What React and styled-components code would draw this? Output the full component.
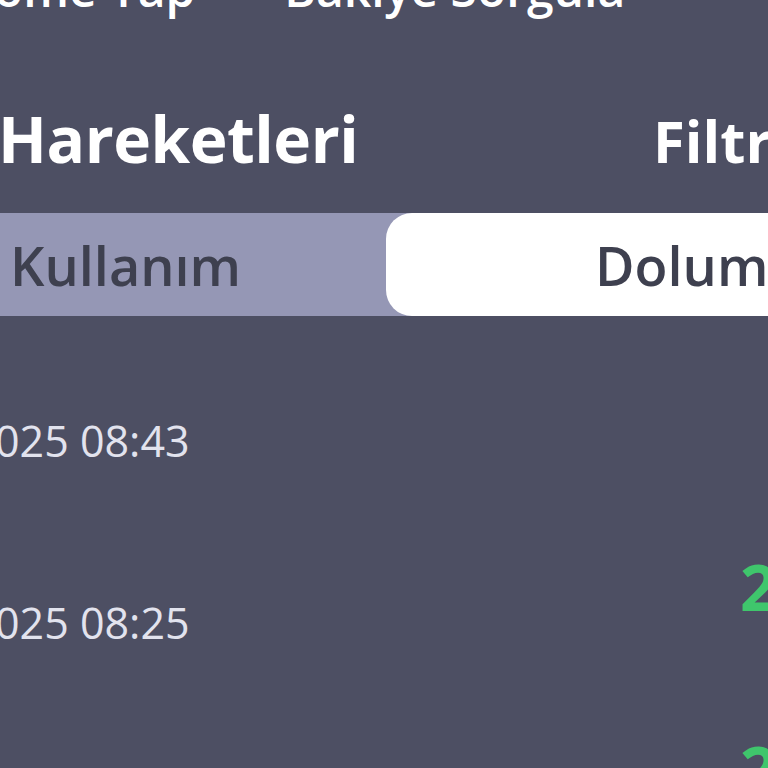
import React from "react";
import styled, { createGlobalStyle } from "styled-components";

const GlobalStyle = createGlobalStyle`
  html, body {
    margin: 0;
    padding: 0;
    background: #4d4f63;
  }
  body {
    overflow: hidden;
  }
`;

const Screen = styled.div`
  width: 768px;
  height: 768px;
  overflow: hidden;
  background: #4d4f63;
  font-family: "Open Sans", "Noto Sans", sans-serif;
  color: #ffffff;
`;

const ActionLabels = styled.div`
  display: flex;
  height: 20px;
  margin-top: -40px;
  padding-bottom: 24px;
  font-size: 48px;
  font-weight: 600;
  line-height: 58px;
  white-space: nowrap;
`;

const ActionLabel = styled.div`
  margin-left: ${(p) => p.$offset}px;
`;

const TitleRow = styled.div`
  display: flex;
  justify-content: space-between;
  align-items: baseline;
  margin-top: 87px;
  white-space: nowrap;
`;

const Title = styled.h1`
  margin: 0 0 0 -2px;
  font-size: 64px;
  font-weight: 700;
  line-height: 96px;
  letter-spacing: -0.5px;
`;

const FilterButton = styled.span`
  font-size: 58px;
  font-weight: 700;
  margin-right: -90px;
`;

const Segment = styled.div`
  display: grid;
  grid-template-columns: 386px 526px;
  height: 103px;
  margin-top: 26px;
  background: #9597b5;
`;

const SegmentItem = styled.div`
  display: flex;
  align-items: center;
  padding-left: ${(p) => p.$pad}px;
  font-size: 54px;
  font-weight: 600;
  color: #3e404f;
  background: ${(p) => (p.$active ? "#ffffff" : "transparent")};
  border-radius: ${(p) => (p.$active ? "26px 0 0 26px" : "0")};
  white-space: nowrap;
`;

const List = styled.div`
  display: flex;
  flex-direction: column;
  padding-top: 35px;
`;

const Row = styled.div`
  display: grid;
  grid-template-columns: 740px auto;
  grid-template-rows: 60px 60px;
  height: 182px;
  white-space: nowrap;
`;

const Amount = styled.div`
  grid-column: 2;
  grid-row: 1;
  align-self: start;
  margin-top: 22px;
  font-size: 64px;
  font-weight: 700;
  line-height: 64px;
  color: #3fc66c;
`;

const DateText = styled.div`
  grid-column: 1;
  grid-row: 2;
  margin-left: -5px;
  font-size: 43px;
  font-weight: 400;
  line-height: 60px;
  color: #e2e3ee;
`;

const rows = [
  { date: "025 08:43", amount: "" },
  { date: "025 08:25", amount: "20,00 ₺" },
  { date: "025 08:10", amount: "25,00 ₺" },
];

export default function App() {
  return (
    <>
      <GlobalStyle />
      <Screen>
        <ActionLabels>
          <ActionLabel $offset={-6}>ome Yap</ActionLabel>
          <ActionLabel $offset={89}>Bakiye Sorgula</ActionLabel>
        </ActionLabels>
        <TitleRow>
          <Title>Hareketleri</Title>
          <FilterButton>Filtrele</FilterButton>
        </TitleRow>
        <Segment>
          <SegmentItem $pad={10}>Kullanım</SegmentItem>
          <SegmentItem $active $pad={209}>Dolum</SegmentItem>
        </Segment>
        <List>
          {rows.map((r, i) => (
            <Row key={i}>
              {r.amount && <Amount>{r.amount}</Amount>}
              <DateText>{r.date}</DateText>
            </Row>
          ))}
        </List>
      </Screen>
    </>
  );
}
